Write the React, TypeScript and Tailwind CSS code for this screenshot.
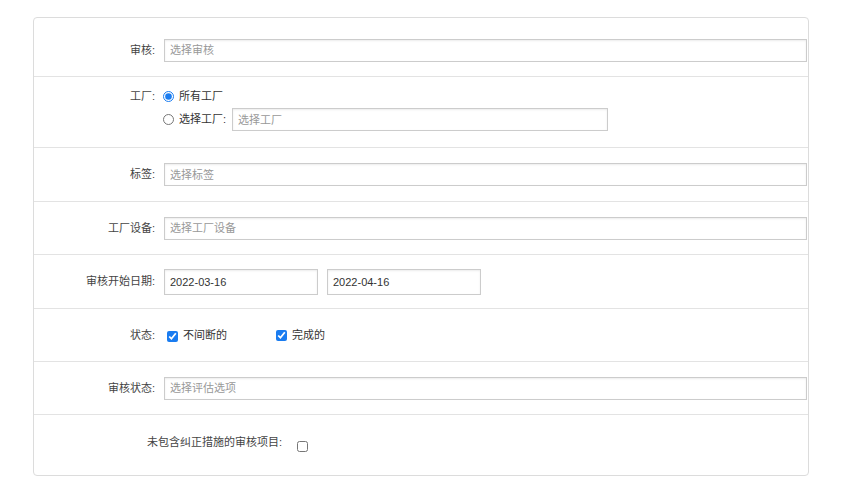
import React from 'react';

const inputCls =
  'h-[23px] border border-[#cccccc] bg-white px-[5px] text-[11px] text-[#333] placeholder:text-[#999] outline-none shadow-[inset_0_1px_2px_rgba(0,0,0,0.08)]';

function Label({ text }: { text: string }) {
  return <div className="w-[123px] shrink-0 pr-[2px] text-right text-[#444]">{text}</div>;
}

export default function App() {
  return (
    <div className="min-h-screen bg-white font-['Liberation_Sans','Noto_Sans_CJK_SC',sans-serif] text-[11px] text-[#333]">
      <div className="ml-[33px] mt-[17px] w-[776px] h-[459px] rounded-[4px] border border-[#dcdcdc] flex flex-col">
        {/* 审核 */}
        <div className="h-[59px] shrink-0 border-b border-[#e3e3e3] flex items-center pt-[6px]">
          <Label text="审核:" />
          <input className={`${inputCls} ml-[7px] mr-[1px] flex-1`} placeholder="选择审核" />
        </div>

        {/* 工厂 */}
        <div className="h-[71px] shrink-0 border-b border-[#e3e3e3] flex pt-[12px]">
          <div className="w-[123px] shrink-0 pr-[2px] text-right text-[#444] leading-[15px]">工厂:</div>
          <div className="ml-[6px] flex flex-col gap-[4px]">
            <label className="flex h-[15px] items-center">
              <input type="radio" name="factory" defaultChecked className="m-0 h-[11px] w-[11px] accent-[#1a7cf0]" />
              <span className="ml-[5px]">所有工厂</span>
            </label>
            <label className="flex h-[23px] items-center">
              <input type="radio" name="factory" className="m-0 h-[11px] w-[11px] accent-[#1a7cf0]" />
              <span className="ml-[5px]">选择工厂:</span>
              <input className={`${inputCls} ml-[6px] w-[376px]`} placeholder="选择工厂" />
            </label>
          </div>
        </div>

        {/* 标签 */}
        <div className="h-[54px] shrink-0 border-b border-[#e3e3e3] flex items-center">
          <Label text="标签:" />
          <input className={`${inputCls} ml-[7px] mr-[1px] flex-1`} placeholder="选择标签" />
        </div>

        {/* 工厂设备 */}
        <div className="h-[53px] shrink-0 border-b border-[#e3e3e3] flex items-center">
          <Label text="工厂设备:" />
          <input className={`${inputCls} ml-[7px] mr-[1px] flex-1`} placeholder="选择工厂设备" />
        </div>

        {/* 审核开始日期 */}
        <div className="h-[54px] shrink-0 border-b border-[#e3e3e3] flex items-center">
          <Label text="审核开始日期:" />
          <input
            className={`${inputCls} ml-[7px] h-[26px] w-[154px] px-[5px]`}
            defaultValue="2022-03-16"
          />
          <input
            className={`${inputCls} ml-[9px] h-[26px] w-[154px] px-[5px]`}
            defaultValue="2022-04-16"
          />
        </div>

        {/* 状态 */}
        <div className="h-[53px] shrink-0 border-b border-[#e3e3e3] flex items-center">
          <Label text="状态:" />
          <div className="ml-[7px] flex items-center">
            <label className="flex w-[112px] items-center">
              <input type="checkbox" defaultChecked className="m-0 ml-[3px] mt-[3px] h-[11px] w-[11px] accent-[#1a7cf0]" />
              <span className="ml-[5px]">不间断的</span>
            </label>
            <label className="flex items-center">
              <input type="checkbox" defaultChecked className="m-0 h-[11px] w-[11px] accent-[#1a7cf0]" />
              <span className="ml-[5px]">完成的</span>
            </label>
          </div>
        </div>

        {/* 审核状态 */}
        <div className="h-[53px] shrink-0 border-b border-[#e3e3e3] flex items-center">
          <Label text="审核状态:" />
          <input className={`${inputCls} ml-[7px] mr-[1px] flex-1`} placeholder="选择评估选项" />
        </div>

        {/* 未包含纠正措施 */}
        <div className="flex-1 flex items-center pl-[113px]">
          <span className="text-[#444] -mt-[6px]">未包含纠正措施的审核项目:</span>
          <input type="checkbox" className="m-0 ml-[15px] mt-[2px] h-[11px] w-[11px]" />
        </div>
      </div>
    </div>
  );
}
